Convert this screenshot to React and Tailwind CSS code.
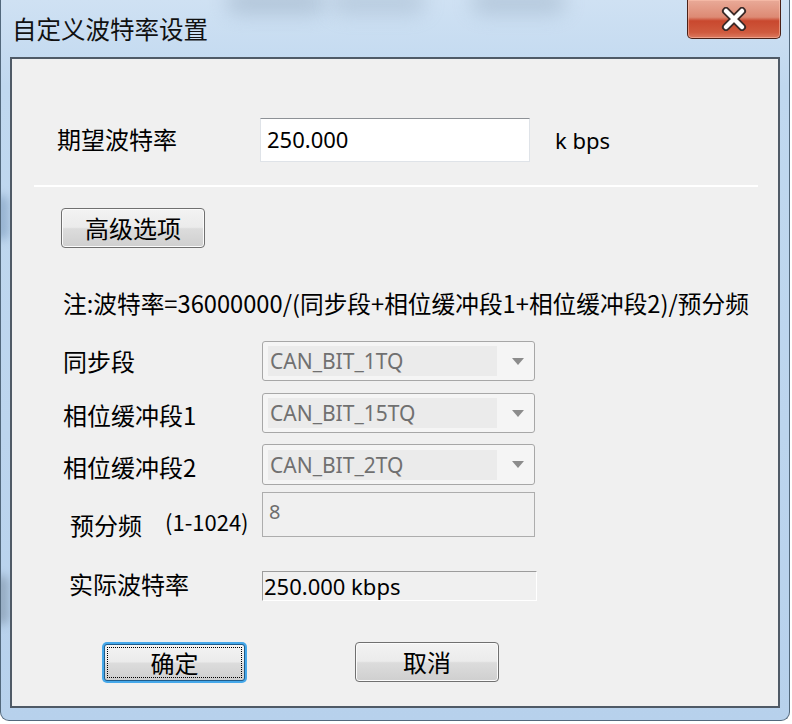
import React from "react";

function WinButton({ children, className }) {
  return (
    <div className={`${className} rounded-[4px] border border-[#707070] bg-[linear-gradient(#f3f3f3_0%,#ebebeb_48%,#dcdcdc_52%,#cfcfcf_100%)] shadow-[inset_0_0_0_1px_#fbfbfb] flex items-center justify-center text-[24px] leading-[30px] text-black`}>
      {children}
    </div>
  );
}

function FocusButton({ children, className }) {
  return (
    <div className={`${className} rounded-[5px] bg-[#46a8ea] p-[2px]`}>
      <div className="relative w-full h-full rounded-[3px] border border-[#1f5d8c] bg-[linear-gradient(#f3f3f3_0%,#ebebeb_48%,#dcdcdc_52%,#cfcfcf_100%)] flex items-center justify-center text-[24px] leading-[30px] text-black">
        <div className="absolute inset-[2px] border border-dotted border-black" />
        {children}
      </div>
    </div>
  );
}

function Combo({ value }) {
  return (
    <div className="w-[273px] h-full rounded-[3px] border border-[#a7a7a7] bg-[#f5f5f5] flex items-center pl-[5px] pr-[10px]">
      <div className="w-[229px] h-[30px] bg-[#ebebeb] flex items-center pl-[2px] text-[#707070] text-[21px] leading-[30px] font-['Noto_Sans','Noto_Sans_CJK_SC',sans-serif]">
        {value}
      </div>
      <div className="flex-1 flex justify-end">
        <svg width="12" height="7" viewBox="0 0 12 7">
          <path d="M0 0H12L6 7Z" fill="#8c8c8c" />
        </svg>
      </div>
    </div>
  );
}

export default function App() {
  return (
    <div className="w-[792px] h-[724px] bg-white overflow-hidden relative font-['Noto_Sans_CJK_SC','Noto_Sans',sans-serif] text-black">
      <div className="relative w-[790px] h-[721px] rounded-b-[9px] border-x border-b border-[#52687c] bg-[linear-gradient(180deg,#cfe1f3_0%,#c0d8ef_12%,#bcd5ee_60%,#b7d1ec_100%)] flex flex-col overflow-hidden">
        {/* blurred glass background */}
        <div className="absolute left-[225px] top-[-10px] w-[100px] h-[24px] rounded-full bg-[#8ea3b8] opacity-45 blur-[10px]" />
        <div className="absolute left-[330px] top-[-10px] w-[95px] h-[24px] rounded-full bg-[#8ea3b8] opacity-35 blur-[10px]" />
        <div className="absolute left-[470px] top-[-10px] w-[95px] h-[24px] rounded-full bg-[#8ea3b8] opacity-40 blur-[10px]" />
        <div className="absolute left-[-8px] top-[195px] w-[16px] h-[45px] rounded-full bg-[#6f8fb3] opacity-50 blur-[5px]" />
        <div className="absolute left-[-8px] top-[575px] w-[16px] h-[50px] rounded-full bg-[#5f6f80] opacity-40 blur-[5px]" />

        {/* title bar */}
        <div className="relative h-[57px] shrink-0 flex items-start pl-[11px] pt-[14px]">
          <span className="text-[24.5px] leading-[30px] text-[#111]">自定义波特率设置</span>
          <div className="absolute left-[686px] top-0 w-[94px] h-[39px] rounded-b-[5px] border border-t-0 border-[#4a2118] bg-[linear-gradient(180deg,#e9aa98_0%,#dd8a74_45%,#c9482e_55%,#cf5a3e_85%,#dc7a60_100%)] shadow-[inset_0_0_0_1px_rgba(255,200,180,0.5)] flex items-center justify-center">
            <svg width="30" height="24" viewBox="0 0 30 24">
              <path d="M7 4L23 20M23 4L7 20" stroke="#3a2a28" strokeWidth="8" strokeLinecap="round" />
              <path d="M7 4L23 20M23 4L7 20" stroke="#ffffff" strokeWidth="4.5" strokeLinecap="round" />
            </svg>
          </div>
        </div>

        {/* client area */}
        <div className="relative mx-[9px] mb-[12px] flex-1 border-2 border-[#4f5a66] bg-[#f0f0f0] flex flex-col">
          {/* row 1 */}
          <div className="mt-[59px] h-[44px] flex items-center">
            <div className="ml-[45px] w-[203px] text-[24px] leading-[30px] -mt-[3px]">期望波特率</div>
            <div className="w-[270px] h-[44px] bg-white border border-[#dfe3e8] border-t-[#8d9196] flex items-center pl-[6px] text-[22px] leading-[30px] -mt-[0px] font-['Noto_Sans','Noto_Sans_CJK_SC',sans-serif]">
              <span className="-mt-[3px]">250.000</span>
            </div>
            <div className="ml-[25px] text-[22px] leading-[30px] font-['Noto_Sans','Noto_Sans_CJK_SC',sans-serif]">k bps</div>
          </div>

          {/* separator */}
          <div className="mt-[23px] ml-[22px] w-[724px] h-[2px] bg-white" />

          {/* advanced */}
          <WinButton className="mt-[21px] ml-[49px] w-[144px] h-[40px]">高级选项</WinButton>

          {/* note */}
          <div className="mt-[40px] ml-[51px] text-[23.7px] leading-[30px] whitespace-nowrap">
            注:波特率=36000000/(同步段+相位缓冲段1+相位缓冲段2)/预分频
          </div>

          {/* combos */}
          <div className="mt-[23px] h-[40px] flex items-center">
            <div className="ml-[51px] w-[199px] text-[24px] leading-[30px]">同步段</div>
            <Combo value="CAN_BIT_1TQ" />
          </div>
          <div className="mt-[12px] h-[40px] flex items-center">
            <div className="ml-[51px] w-[199px] text-[24px] leading-[30px] mt-[3px]">相位缓冲段1</div>
            <Combo value="CAN_BIT_15TQ" />
          </div>
          <div className="mt-[11px] h-[41px] flex items-center">
            <div className="ml-[51px] w-[199px] text-[24px] leading-[30px] mt-[5px]">相位缓冲段2</div>
            <Combo value="CAN_BIT_2TQ" />
          </div>

          {/* prescaler */}
          <div className="mt-[7px] h-[45px] flex items-start">
            <div className="ml-[58px] w-[95px] pt-[18px] text-[24px] leading-[30px]">预分频</div>
            <div className="w-[97px] pt-[14px] text-[22px] leading-[30px]">(1-1024)</div>
            <div className="w-[273px] h-[45px] border border-[#adadad] bg-[#f0f0f0] pl-[6px] pt-[4px] text-[20px] leading-[30px] text-[#6d6d6d] font-['Noto_Sans','Noto_Sans_CJK_SC',sans-serif]">
              8
            </div>
          </div>

          {/* actual */}
          <div className="mt-[34px] h-[30px] flex items-center">
            <div className="ml-[57px] w-[193px] text-[24px] leading-[30px] -mt-[5px]">实际波特率</div>
            <div className="w-[275px] h-[30px] border border-[#9c9c9c] border-r-white border-b-white bg-[#f0f0f0] flex items-center pl-[1px] text-[22px] leading-[28px] font-['Noto_Sans','Noto_Sans_CJK_SC',sans-serif]">
              250.000 kbps
            </div>
          </div>

          {/* buttons */}
          <div className="mt-[41px] flex items-start">
            <FocusButton className="ml-[90px] w-[145px] h-[41px]">确定</FocusButton>
            <WinButton className="ml-[108px] w-[144px] h-[40px]">取消</WinButton>
          </div>
        </div>
      </div>
    </div>
  );
}
